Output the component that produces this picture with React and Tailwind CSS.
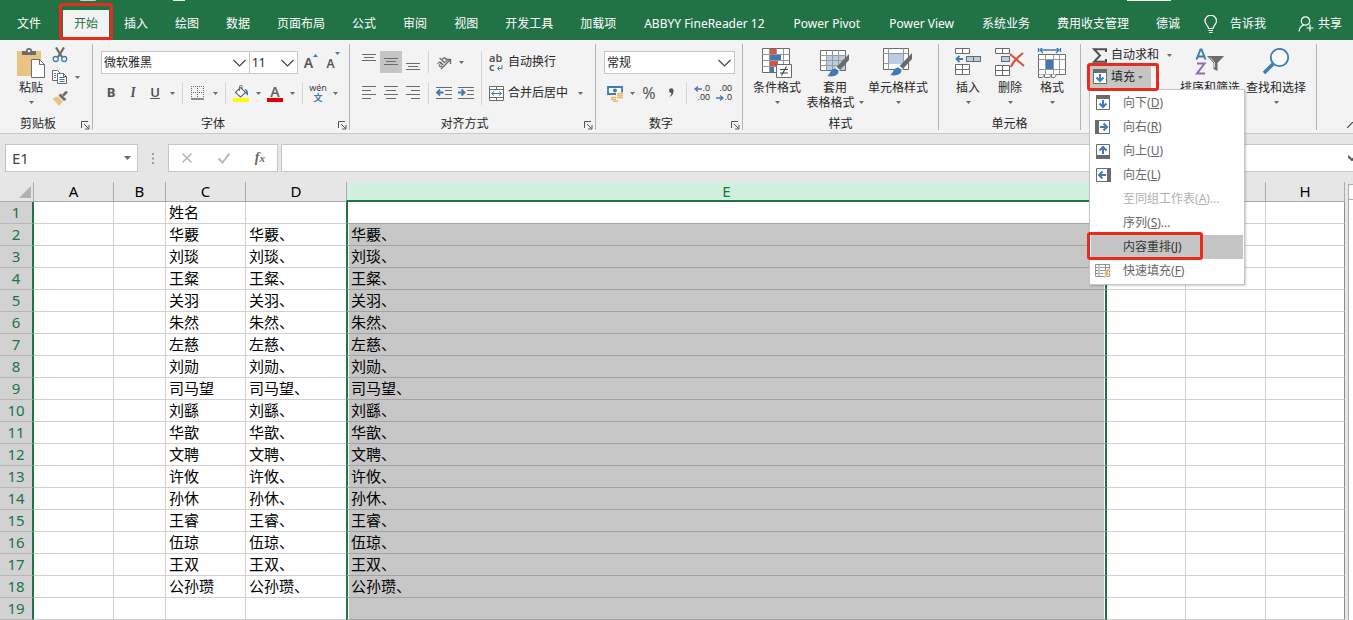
import React from 'react';

const tabs = ['插入', '绘图', '数据', '页面布局', '公式', '审阅', '视图', '开发工具', '加载项'];
const addinTabs = ['ABBYY FineReader 12', 'Power Pivot', 'Power View'];
const customTabs = ['系统业务', '费用收支管理', '德诚'];

const names = [
  '华覈', '刘琰', '王粲', '关羽', '朱然', '左慈', '刘勋', '司马望', '刘繇',
  '华歆', '文聘', '许攸', '孙休', '王睿', '伍琼', '王双', '公孙瓒',
];

const rows = Array.from({ length: 19 }, (_, i) => {
  const name = names[i - 1];
  return {
    n: i + 1,
    c: i === 0 ? '姓名' : name || '',
    d: name ? `${name}、` : '',
    e: name ? `${name}、` : '',
  };
});

const fillMenu = [
  { label: '向下', letter: 'D', icon: 'down' },
  { label: '向右', letter: 'R', icon: 'right' },
  { label: '向上', letter: 'U', icon: 'up' },
  { label: '向左', letter: 'L', icon: 'left' },
  { label: '至同组工作表', letter: 'A', more: true, disabled: true },
  { label: '序列', letter: 'S', more: true },
  { label: '内容重排', letter: 'J', active: true },
  { label: '快速填充', letter: 'F', icon: 'flash' },
];

const GRAY = '#6b6b6b';
const BLUE = '#3f7ab5';

/* ---------- small shared parts ---------- */

const Svg = ({ w = 16, h = 16, children }) => (
  <svg width={w} height={h} viewBox={`0 0 ${w} ${h}`} fill="none" className="shrink-0" aria-hidden="true">
    {children}
  </svg>
);

const Triangle = () => (
  <Svg w={5} h={3}><path d="M0 0h5L2.5 3z" fill={GRAY} /></Svg>
);

const CaretButton = ({ label }) => (
  <button type="button" aria-label={label} className="flex h-[22px] w-3 items-center justify-center">
    <Triangle />
  </button>
);

const IconButton = ({ label, active, children }) => (
  <button
    type="button"
    aria-label={label}
    className={`flex h-[22px] w-[22px] items-center justify-center ${active ? 'bg-[#c5c5c5]' : ''}`}
  >
    {children}
  </button>
);

const MiniSep = () => <div className="mx-1 h-[22px] w-px bg-[#d5d5d5]" />;

const GroupSep = () => <div className="h-[86px] w-px shrink-0 bg-[#b4b4b4]" />;

const Launcher = ({ label }) => (
  <button type="button" aria-label={label} className="absolute right-0.5 bottom-0.5">
    <Svg w={9} h={9}>
      <path d="M.5 7V.5H7M3 3l4.500 4.500M8 4v4H4" stroke="#555" />
    </Svg>
  </button>
);

const Group = ({ label, launcher, width, children }) => (
  <section aria-label={label || '编辑'} className={`flex h-[88px] shrink-0 flex-col ${width}`}>
    <div className="flex h-[72px]">{children}</div>
    <footer className={`relative h-4 text-center leading-4 ${launcher ? 'pr-4' : ''}`}>
      {label}
      {launcher && <Launcher label={`${label}设置`} />}
    </footer>
  </section>
);

const Dropdown = ({ label, value, width }) => (
  <div className={`relative h-[23px] ${width}`}>
    <select
      aria-label={label}
      defaultValue={value}
      className="h-full w-full appearance-none border border-[#c6c6c6] bg-white px-[2px] text-xs text-[#262626]"
    >
      <option>{value}</option>
    </select>
    <span className="pointer-events-none absolute inset-y-0 right-1 flex items-center">
      <Svg w={13} h={8}><path d="M.5 1l6 6 6-6" stroke="#444" strokeWidth="1.2" /></Svg>
    </span>
  </div>
);

const BigButton = ({ icon, lines, width }) => (
  <button type="button" className={`flex flex-col items-center pt-1 leading-[15px] ${width}`}>
    <span className="flex h-8 items-start justify-center">{icon}</span>
    <span className="whitespace-nowrap">{lines[0]}</span>
    <span className="flex h-[15px] items-center gap-1 whitespace-nowrap">
      {lines[1] && <span>{lines[1]}</span>}
      <Triangle />
    </span>
  </button>
);

/* ---------- icons ---------- */

const PasteIcon = () => (
  <Svg w={28} h={30}>
    <rect x="0" y="3" width="24" height="25" fill="#eac282" />
    <path d="M5 7V3h4a3 3 0 0 1 6 0h4v4z" fill={GRAY} />
    <circle cx="12" cy="3" r="1.3" fill="#f3f3f3" />
    <path d="M14.500 11.500h8l5 5v13h-13z" fill="#fff" stroke={GRAY} />
    <path d="M22.500 11.500v5h5" stroke={GRAY} />
  </Svg>
);

const CutIcon = () => (
  <Svg>
    <path d="M4 .5l6 9.500M12 .5L6 10" stroke={GRAY} strokeWidth="2.200" />
    <circle cx="3.700" cy="12" r="2.500" stroke={BLUE} strokeWidth="1.300" />
    <circle cx="12.200" cy="12" r="2.500" stroke={BLUE} strokeWidth="1.300" />
  </Svg>
);

const CopyIcon = () => (
  <Svg>
    <path d="M6 11.500H.5v-10h5l3 3" stroke={GRAY} fill="#fff" />
    <path d="M5.500 4.500h6l3 3v7h-9z" fill="#fff" stroke={GRAY} />
    <path d="M11.500 4.500v3h3" stroke={GRAY} />
    <path d="M2 4.500h2M2 6.500h2M2 8.500h2M7.500 8.500h5M7.500 10.500h5M7.500 12.500h5" stroke={BLUE} />
  </Svg>
);

const BrushIcon = () => (
  <Svg>
    <path d="M1 7l5-1.500 5 5L7 15 1 8z" fill="#eac282" />
    <path d="M6.500 4.500l2-2 6 6-2.500 1.500z" fill={GRAY} />
    <path d="M11 4.500l4-4" stroke={GRAY} strokeWidth="2.500" />
  </Svg>
);

const GrowShrink = ({ up }) => (
  <span className="flex items-start text-[#555]">
    <span className={up ? 'pt-0.5 text-sm leading-4 font-semibold' : 'pt-1 text-xs leading-4 font-semibold'}>A</span>
    <Svg w={5} h={4}><path d={up ? 'M0 4h5L2.500 1z' : 'M0 0h5L2.500 3z'} fill={BLUE} /></Svg>
  </span>
);

const BordersIcon = () => (
  <Svg w={14} h={14}>
    <path d="M.5 0v12M6.500 0v12M12.500 0v12M0 .5h13M0 6.500h13" stroke={GRAY} strokeDasharray="1 1" />
    <path d="M0 13h13" stroke={GRAY} strokeWidth="1.500" />
  </Svg>
);

const BucketIcon = () => (
  <Svg w={16} h={17}>
    <path d="M2.500 7.500L7.500 2.500l5 5-5 4.500z" fill="#fff" stroke={GRAY} strokeWidth="1.200" />
    <path d="M6.500 6V1.500a1.200 1.200 0 0 1 2.500 0V4" stroke={GRAY} />
    <path d="M11.500 4c2.500 0 4 2 3.500 6.500-2-.5-2.500-3-2-4z" fill={BLUE} />
    <rect x="0" y="13" width="16" height="4" fill="#ffff00" />
  </Svg>
);

const FontColor = () => (
  <span className="flex flex-col items-center">
    <span className="text-sm leading-[13px] font-semibold text-[#666]">A</span>
    <span className="h-1 w-4 bg-[#e00000]" />
  </span>
);

const Phonetic = () => (
  <span className="flex flex-col items-center text-[9px] leading-[10px]">
    <span className="text-[#444]">wén</span>
    <span className="font-bold text-[#3f7ab5]">文</span>
  </span>
);

const lineSets = {
  left: [[0, 2, 14], [0, 6, 9], [0, 10, 14], [0, 14, 9]],
  center: [[0, 2, 14], [2, 6, 10], [0, 10, 14], [2, 14, 10]],
  right: [[0, 2, 14], [5, 6, 9], [0, 10, 14], [5, 14, 9]],
};

const VAlign = ({ pos }) => {
  const y = { top: 0, middle: 4, bottom: 9 }[pos];
  return (
    <Svg w={14} h={16}>
      <path d={`M0 ${y + 0.5}h14M2 ${y + 3.5}h10M0 ${y + 6.5}h14`} stroke={GRAY} />
    </Svg>
  );
};

const HAlign = ({ kind }) => (
  <Svg w={14} h={16}>
    {lineSets[kind].map(([x, y, len]) => (
      <path key={y} d={`M${x} ${y - 0.5}h${len}`} stroke={GRAY} />
    ))}
  </Svg>
);

const IndentIcon = ({ dir }) => (
  <Svg w={16} h={14}>
    <path d="M0 1.500h16M9 4.500h7M9 8.500h7M0 12.500h16" stroke={GRAY} />
    {dir === 'out'
      ? <path d="M7.500 6.500H1.500M4 3.500l-3 3 3 3" stroke={BLUE} strokeWidth="1.800" />
      : <path d="M0 6.500h6M3.500 3.500l3 3-3 3" stroke={BLUE} strokeWidth="1.800" />}
  </Svg>
);

const OrientIcon = () => (
  <Svg w={20} h={20}>
    <text x="2" y="13" fontSize="10" fontWeight="600" fill={GRAY} transform="rotate(-45 8 10)">ab</text>
    <path d="M7 17l9-9M12 7.500h4.500V12" stroke={GRAY} strokeWidth="1.300" />
  </Svg>
);

const WrapIcon = () => (
  <span className="flex w-4 flex-col items-start text-[11px] leading-[9px] font-semibold text-[#555]">
    <span>ab</span>
    <span className="flex items-end gap-0.5">
      c
      <Svg w={6} h={6}><path d="M5 0v3.500H1M2.500 1.500l-2 2 2 2" stroke={BLUE} /></Svg>
    </span>
  </span>
);

const MergeIcon = () => (
  <Svg w={15} h={15}>
    <path d="M.5.5h14v14H.5zM.5 3.500h14M.5 11.500h14M7.500 .5v3M7.500 11.500v3" stroke={GRAY} fill="#fff" />
    <path d="M3 7.500h9M5 5.500l-2.500 2 2.500 2M10 5.500l2.500 2-2.500 2" stroke={BLUE} />
  </Svg>
);

const MoneyIcon = () => (
  <Svg w={17} h={17}>
    <path d="M1 2h14v7H1z" fill="#fff" stroke={BLUE} strokeWidth="1.800" />
    <circle cx="8" cy="5.500" r="2" fill={BLUE} />
    <path d="M9 7.500h7v7H9z" fill="#f3f3f3" />
    <path d="M10 8.500h6M10 10.500h6M10 12.500h6M4 12.500h5M4 14.500h5M6 16.200h5" stroke="#eab96c" strokeWidth="1.400" />
  </Svg>
);

const DecimalIcon = ({ more }) => (
  <span className="flex w-4 flex-col font-['Liberation_Sans',sans-serif] text-[9px] leading-[9px] text-[#333]">
    <span className="flex items-center justify-end">
      {more && <Svg w={8} h={6}><path d="M8 3H1.500M4 .5L1 3l3 2.500" stroke={BLUE} strokeWidth="1.300" /></Svg>}
      {more ? '.0' : '.00'}
    </span>
    <span className="flex items-center justify-end">
      {!more && <Svg w={8} h={6}><path d="M0 3h6.500M4 .5L7 3 4 5.500" stroke={BLUE} strokeWidth="1.300" /></Svg>}
      {more ? '.00' : '.0'}
    </span>
  </span>
);

const CondFormatIcon = () => (
  <Svg w={31} h={30}>
    <path d="M.5.500h27v24H.5z" fill="#fff" stroke={GRAY} />
    <path d="M.5 6.500h27M.5 12.500h27M.5 18.500h27M7.500 .5v24M14.500 .5v24M21.500 .5v24" stroke="#9a9a9a" />
    <rect x="8" y="1" width="6" height="5" fill="#d2573d" />
    <rect x="8" y="7" width="11" height="5" fill={BLUE} />
    <rect x="8" y="13" width="8" height="5" fill="#d2573d" />
    <rect x="8" y="19" width="4" height="5" fill={BLUE} />
    <path d="M14.500 16.500h15v13h-15z" fill="#fff" stroke={GRAY} />
    <path d="M18 21.500h8M18 25h8M24.500 18.500l-5 9" stroke="#444" strokeWidth="1.200" />
  </Svg>
);

const PaintBrush = () => (
  <>
    <path d="M29 6v6l-9 10-3.500-3z" fill={GRAY} />
    <path d="M16 19.500l3.500 3" stroke="#fff" strokeWidth="1.500" />
    <path d="M7 28c3-1 3-6 7-7.500 3 0 5.500 2.500 4 5C16 28.500 11 29 7 28z" fill={BLUE} />
  </>
);

const TableFormatIcon = () => (
  <Svg w={30} h={30}>
    <path d="M.5 2.500h25v20H.5z" fill="#fff" stroke={GRAY} />
    <rect x="7" y="8" width="18" height="14" fill="#b9cde4" />
    <path d="M.5 7.500h25M.5 12.500h25M.5 17.500h25M6.500 2.500v20M12.500 2.500v20M18.500 2.500v20" stroke="#9a9a9a" />
    <PaintBrush />
  </Svg>
);

const CellStyleIcon = () => (
  <Svg w={30} h={30}>
    <path d="M.5.5h25v21H.5z" fill="#fff" stroke={GRAY} />
    <path d="M.5 5.500h25M.5 15.500h25M5.500 .5v21M20.500 .5v21" stroke="#9a9a9a" />
    <rect x="6" y="6" width="14" height="10" fill="#b9cde4" />
    <g transform="translate(0 -1)"><PaintBrush /></g>
  </Svg>
);

const InsertCellsIcon = () => (
  <Svg w={27} h={30}>
    <path d="M.5.5h14v5H.5zM7.500 .5v5M.5 16.500h14v10H.5zM.5 21.500h14M7.500 16.500v10" stroke={GRAY} fill="#fff" />
    <rect x="11.500" y="8.500" width="14" height="5" fill="#b9cde4" stroke={GRAY} />
    <path d="M18.500 8.500v5" stroke={GRAY} />
    <path d="M8 11H2M4.500 8L1.500 11l3 3" stroke={BLUE} strokeWidth="1.800" />
  </Svg>
);

const DeleteCellsIcon = () => (
  <Svg w={30} h={30}>
    <path d="M.5.5h14v5H.5zM7.500 .5v5M.5 17.500h14v10H.5zM.5 22.500h14M7.500 17.500v10" stroke={GRAY} fill="#fff" />
    <rect x="6.500" y="8.500" width="8" height="5" fill="#b9cde4" stroke={GRAY} />
    <path d="M15 6l14 12M28 5C23 9 18 13 16 19" stroke="#d2573d" strokeWidth="2.200" />
  </Svg>
);

const FormatCellsIcon = () => (
  <Svg w={30} h={31}>
    <path d="M1.500 -1v5M23.500 -1v5M3 2h19M6 -1L3 2l3 3M19 -1l3 3-3 3" stroke={BLUE} strokeWidth="1.300" />
    <path d="M1.500 6.500h27v20h-27z" fill="#fff" stroke={GRAY} />
    <path d="M1.500 11.500h27M1.500 21.500h27M8.500 6.500v20M16.500 6.500v20M22.500 6.500v20" stroke="#9a9a9a" />
    <rect x="9" y="12" width="7" height="9" fill={BLUE} />
    <path d="M1.500 26.500v3h4l2-3v3h5l2-3v3h3l2-3" stroke={GRAY} fill="#fff" />
  </Svg>
);

const SortFilterIcon = () => (
  <Svg w={30} h={30}>
    <path d="M1.500 11.500L5.500 1.500h1l4 10M3 8.500h6" stroke={BLUE} strokeWidth="2" />
    <path d="M2 15.500h7.500L2 25.500h8" stroke="#9068b8" strokeWidth="2" />
    <path d="M12 8h17l-6.500 7v8l-4-2v-6z" fill={GRAY} />
    <path d="M15 9.500l4.500 5v5" stroke="#d8d8d8" />
  </Svg>
);

const FindIcon = () => (
  <Svg w={28} h={28}>
    <circle cx="17.500" cy="9.500" r="8.700" stroke={BLUE} strokeWidth="1.800" fill="#fafafa" />
    <path d="M11 16L2 25" stroke={BLUE} strokeWidth="3.500" />
  </Svg>
);

const SigmaIcon = () => (
  <Svg w={16} h={15}>
    <path d="M14 4V1.200H2l6 6.300-6 6.300h12V11" stroke="#505050" strokeWidth="2" />
  </Svg>
);

// Arrow box with a solid band on the side the fill starts from
const fillRotation = { down: 0, left: 90, up: 180, right: 270 };

const FillIcon = ({ dir }) => (
  <Svg>
    <g transform={`rotate(${fillRotation[dir]} 8 8)`}>
      <path d="M1.500 1.500h13v13h-13z" fill="#fff" stroke={GRAY} />
      <rect x="1" y="0" width="14" height="4" fill={GRAY} />
      <path d="M8 5v7M4.500 8.500L8 12l3.500-3.500" stroke={BLUE} strokeWidth="2" />
    </g>
  </Svg>
);

const FlashFillIcon = () => (
  <Svg>
    <path d="M.5 1.500h14v12H.5zM.5 4.500h3M5 4.500h5M.5 7.500h3M5 7.500h5M.5 10.500h3M5 10.500h5M4 1.500v12M10.500 1.500v12M11 4.500h4" stroke="#8a9a90" fill="#fff" />
    <path d="M12 6L8.500 11H11l-2 5 6-6h-2.500L15.500 6z" fill="#eab05c" stroke="#fff" strokeWidth=".5" />
  </Svg>
);

/* ---------- page sections ---------- */

const Callout = ({ className }) => (
  <span className={`pointer-events-none absolute z-20 rounded-[3px] border-3 border-[#ea2a1d] ${className}`} />
);

const TitleTabs = () => (
  <header className="relative flex h-10 items-end bg-[#217346] pb-[3px] text-white">
    <span className="absolute top-0 left-20 h-px w-4 rounded-b bg-white/70" />
    <span className="absolute top-0 left-[173px] h-px w-3 bg-white/90" />
    <span className="absolute top-0 right-[182px] h-px w-11 bg-white" />
    <nav className="flex h-[27px] items-center pl-[17px] whitespace-nowrap">
      <button type="button" className="mr-[22px]">文件</button>
      <button type="button" className="relative mr-[15px] h-[27px] bg-[#f3f3f3] px-[11px] text-[#217346]">
        开始
        <Callout className="-inset-x-1 -top-[7px] -bottom-[3px]" />
      </button>
      <div className="flex gap-[27px]">
        {tabs.map((t) => <button type="button" key={t}>{t}</button>)}
        {addinTabs.map((t) => <button type="button" key={t} className="px-px">{t}</button>)}
        {customTabs.map((t) => <button type="button" key={t}>{t}</button>)}
      </div>
    </nav>
    <button type="button" className="ml-6 flex h-[27px] items-center gap-3 whitespace-nowrap">
      <Svg w={14} h={18}>
        <path d="M4.500 13.500c0-2.500-3.500-4-3.500-7.500a5.500 5.500 0 0 1 11.500 0c0 3.500-3.500 5-3.500 7.500zM4.500 15.500H9M5 17.500h3.500" stroke="#fff" strokeWidth="1.200" />
      </Svg>
      告诉我
    </button>
    <button type="button" className="mr-[11px] ml-auto flex h-[27px] items-center gap-1 whitespace-nowrap">
      <Svg w={16} h={16}>
        <circle cx="7.500" cy="5" r="4.200" stroke="#fff" strokeWidth="1.200" />
        <path d="M1 15.500c.5-4 2.500-6 5-6.500M12 8.500v7M8.500 12h7" stroke="#fff" strokeWidth="1.200" />
      </Svg>
      共享
    </button>
  </header>
);

const FillMenu = () => (
  <ul role="menu" className="absolute top-[23px] left-0 z-10 w-39 border border-[#c6c6c6] bg-white py-px shadow-[1px_1px_2px_rgba(0,0,0,0.2)]">
    {fillMenu.map((m) => (
      <li key={m.letter} role="none" className="relative px-px">
        <button
          type="button"
          role="menuitem"
          disabled={m.disabled}
          className={`flex h-6 w-full items-center pl-1 whitespace-nowrap ${m.active ? 'bg-[#c5c5c5] text-[#333]' : m.disabled ? 'text-[#b0b0b0]' : 'text-[#666]'}`}
        >
          <span className="mr-3 w-4">
            {m.icon === 'flash' ? <FlashFillIcon /> : m.icon && <FillIcon dir={m.icon} />}
          </span>
          {m.label}(<u>{m.letter}</u>){m.more && '...'}
        </button>
        {m.active && <Callout className="-top-[3px] -bottom-px -left-[3px] w-29" />}
      </li>
    ))}
  </ul>
);

const Ribbon = () => (
  <div className="flex items-start border-b border-[#c9c9c9] bg-[#f3f3f3] pt-1 pb-px">
    <Group label="剪贴板" launcher width="w-[92px]">
      <div className="flex pl-[13px]">
        <BigButton icon={<PasteIcon />} lines={['粘贴']} width="w-9" />
        <div className="flex flex-col">
          <IconButton label="剪切"><CutIcon /></IconButton>
          <div className="flex">
            <IconButton label="复制"><CopyIcon /></IconButton>
            <CaretButton label="复制选项" />
          </div>
          <IconButton label="格式刷"><BrushIcon /></IconButton>
        </div>
      </div>
    </Group>
    <GroupSep />

    <Group label="字体" launcher width="w-[256px]">
      <div className="flex flex-col gap-2 pt-[7px] pl-2">
        <div className="flex">
          <Dropdown label="字体" value="微软雅黑" width="w-[149px]" />
          <Dropdown label="字号" value="11" width="-ml-px w-[49px]" />
          <div className="ml-0.5 flex">
            <IconButton label="增大字号"><GrowShrink up /></IconButton>
            <IconButton label="减小字号"><GrowShrink /></IconButton>
          </div>
        </div>
        <div className="-ml-px flex text-[13px] text-[#555]">
          <IconButton label="加粗"><b>B</b></IconButton>
          <IconButton label="倾斜"><i className="font-serif font-bold">I</i></IconButton>
          <IconButton label="下划线"><u className="font-semibold">U</u></IconButton>
          <CaretButton label="下划线选项" />
          <MiniSep />
          <IconButton label="边框"><BordersIcon /></IconButton>
          <CaretButton label="边框选项" />
          <MiniSep />
          <IconButton label="填充颜色"><BucketIcon /></IconButton>
          <CaretButton label="填充颜色选项" />
          <IconButton label="字体颜色"><FontColor /></IconButton>
          <CaretButton label="字体颜色选项" />
          <MiniSep />
          <IconButton label="拼音"><Phonetic /></IconButton>
          <CaretButton label="拼音选项" />
        </div>
      </div>
    </Group>
    <GroupSep />

    <Group label="对齐方式" launcher width="w-[245px]">
      <div className="flex pt-[7px] pl-2">
        <div className="flex flex-col gap-[9px]">
          <div className="flex">
            <IconButton label="顶端对齐"><VAlign pos="top" /></IconButton>
            <IconButton label="垂直居中" active><VAlign pos="middle" /></IconButton>
            <IconButton label="底端对齐"><VAlign pos="bottom" /></IconButton>
            <MiniSep />
            <IconButton label="方向"><OrientIcon /></IconButton>
            <CaretButton label="方向选项" />
          </div>
          <div className="flex">
            <IconButton label="左对齐"><HAlign kind="left" /></IconButton>
            <IconButton label="居中"><HAlign kind="center" /></IconButton>
            <IconButton label="右对齐"><HAlign kind="right" /></IconButton>
            <MiniSep />
            <IconButton label="减少缩进量"><IndentIcon dir="out" /></IconButton>
            <IconButton label="增加缩进量"><IndentIcon dir="in" /></IconButton>
          </div>
        </div>
        <div className="mx-1 h-[54px] w-px bg-[#d5d5d5]" />
        <div className="flex flex-col gap-[9px] pl-[3px] whitespace-nowrap">
          <button type="button" className="flex h-[22px] items-center gap-[3px]"><WrapIcon />自动换行</button>
          <div className="flex gap-1.5">
            <button type="button" className="flex h-[22px] items-center gap-1"><MergeIcon />合并后居中</button>
            <CaretButton label="合并选项" />
          </div>
        </div>
      </div>
    </Group>
    <GroupSep />

    <Group label="数字" launcher width="w-[146px]">
      <div className="flex flex-col gap-2 pt-[7px] pl-2">
        <Dropdown label="数字格式" value="常规" width="w-[131px]" />
        <div className="flex">
          <IconButton label="会计数字格式"><MoneyIcon /></IconButton>
          <CaretButton label="会计数字格式选项" />
          <IconButton label="百分比样式"><span className="text-base text-[#555]">%</span></IconButton>
          <IconButton label="千位分隔样式">
            <Svg w={7} h={10}><path d="M1 2.500a2.300 2.300 0 1 1 4.600 0C5.600 6 4 8 1.500 9 3 7 3.500 6 3.200 4.800 2 4.800 1 4 1 2.500z" fill="#555" /></Svg>
          </IconButton>
          <MiniSep />
          <IconButton label="增加小数位数"><DecimalIcon more /></IconButton>
          <IconButton label="减少小数位数"><DecimalIcon /></IconButton>
        </div>
      </div>
    </Group>
    <GroupSep />

    <Group label="样式" width="w-[195px]">
      <div className="flex pl-1.5">
        <BigButton icon={<CondFormatIcon />} lines={['条件格式']} width="w-14" />
        <BigButton icon={<TableFormatIcon />} lines={['套用', '表格格式']} width="w-15" />
        <BigButton icon={<CellStyleIcon />} lines={['单元格样式']} width="w-[66px]" />
      </div>
    </Group>
    <GroupSep />

    <Group label="单元格" width="w-[141px]">
      <div className="flex pl-2">
        <BigButton icon={<InsertCellsIcon />} lines={['插入']} width="w-[42px]" />
        <BigButton icon={<DeleteCellsIcon />} lines={['删除']} width="w-[42px]" />
        <BigButton icon={<FormatCellsIcon />} lines={['格式']} width="w-[42px]" />
      </div>
    </Group>
    <GroupSep />

    <Group label="" width="w-[235px]">
      <div className="flex pl-2 whitespace-nowrap">
        <div className="w-22">
          <div className="flex gap-1">
            <button type="button" className="flex h-[22px] items-center gap-[3px] pl-[3px]"><SigmaIcon />自动求和</button>
            <CaretButton label="自动求和选项" />
          </div>
          <div className="relative">
            <button type="button" aria-haspopup="menu" aria-expanded="true" className="flex h-[22px] w-[62px] items-center gap-[3px] bg-[#c5c5c5] pl-[3px]">
              <FillIcon dir="down" />
              填充
              <Triangle />
            </button>
            <Callout className="-top-[3px] -left-0.5 h-7 w-18" />
            <FillMenu />
          </div>
        </div>
        <BigButton icon={<SortFilterIcon />} lines={['排序和筛选']} width="w-[66px]" />
        <BigButton icon={<FindIcon />} lines={['查找和选择']} width="w-[66px]" />
      </div>
    </Group>
    <GroupSep />
    <button type="button" aria-label="折叠功能区" className="ml-auto self-end overflow-hidden pb-1">
      <Svg w={6} h={6}><path d="M0 6l6-6" stroke="#444" strokeWidth="1.200" /></Svg>
    </button>
  </div>
);

const FormulaBar = () => (
  <div className="flex bg-[#e6e6e6] py-[10px] pl-[5px]">
    <div className="relative h-7 w-[133px] border border-[#c6c6c6] bg-white">
      <input aria-label="名称框" defaultValue="E1" className="h-full w-full px-1.5 text-[15px] text-[#444] outline-none" />
      <span className="absolute inset-y-0 right-1.5 flex items-center">
        <Svg w={7} h={4}><path d="M0 0h7L3.500 4z" fill={GRAY} /></Svg>
      </span>
    </div>
    <div className="flex w-[30px] items-center justify-center">
      <Svg w={2} h={11}><path d="M1 0v2M1 4.500v2M1 9v2" stroke="#9a9a9a" strokeWidth="2" /></Svg>
    </div>
    <div className="flex h-7 w-[110px] items-center justify-around border border-[#c6c6c6] bg-white">
      <button type="button" aria-label="取消">
        <Svg w={12} h={12}><path d="M1.500 1.500l9 9M10.500 1.500l-9 9" stroke="#b8b8b8" strokeWidth="1.600" /></Svg>
      </button>
      <button type="button" aria-label="输入">
        <Svg w={14} h={12}><path d="M1.500 6.500l4 4 7-9" stroke="#b8b8b8" strokeWidth="2" /></Svg>
      </button>
      <button type="button" aria-label="插入函数" className="font-['Liberation_Serif',serif] text-sm leading-4 font-bold text-[#666] italic">
        f<span className="text-[11px]">x</span>
      </button>
    </div>
    <div className="relative ml-[3px] h-7 flex-1 overflow-hidden border border-r-0 border-[#c6c6c6] bg-white">
      <input aria-label="编辑栏" className="h-full w-full px-1 text-sm outline-none" />
      <span className="absolute inset-y-0 right-0 flex items-center">
        <Svg w={5} h={6}><path d="M0 1l4 4 4-4" stroke="#555" strokeWidth="2" /></Svg>
      </span>
    </div>
  </div>
);

const headCell = 'h-5 border-r border-b border-[#ababab] bg-[#e6e6e6] p-0 font-normal';
const bodyCell = 'border-r border-b border-[#d0d0d0] bg-white p-0 pl-[3px]';

const Sheet = () => (
  <div className="flex bg-[#e6e6e6]">
    <table className="flex-1 table-fixed border-separate border-spacing-0 text-[15px] leading-[21px] whitespace-nowrap text-black">
      <colgroup>
        <col className="w-[34px]" />
        <col className="w-20" />
        <col className="w-13" />
        <col className="w-20" />
        <col className="w-25" />
        <col />
        <col className="w-[79px]" />
        <col className="w-20" />
        <col className="w-[79px]" />
      </colgroup>
      <thead>
        <tr className="leading-[19px]">
          <th className={headCell} aria-label="全选">
            <span className="flex justify-end pr-0.5">
              <Svg w={12} h={12}><path d="M12 0v12H0z" fill="#b2b2b2" /></Svg>
            </span>
          </th>
          {['A', 'B', 'C'].map((c) => <th key={c} className={headCell}>{c}</th>)}
          <th className="border-b border-[#ababab] bg-[#e6e6e6] p-0 font-normal">D</th>
          <th className="border-x border-b-2 border-x-[#ababab] border-b-[#217346] bg-[#d2f0e0] p-0 leading-[18px] font-normal text-[#217346]">E</th>
          {['F', 'G', 'H'].map((c) => <th key={c} className={headCell}>{c}</th>)}
        </tr>
      </thead>
      <tbody>
        {rows.map((r) => (
          <tr key={r.n}>
            <th className="h-[22px] border-r-2 border-b border-r-[#217346] border-b-[#b5b5b5] bg-[#d2d2d2] p-0 font-normal text-[#217346]">{r.n}</th>
            <td className={bodyCell} />
            <td className={bodyCell} />
            <td className={bodyCell}>{r.c}</td>
            <td className="border-b border-[#d0d0d0] bg-white p-0 pl-[3px]">{r.d}</td>
            <td className={`border-x-2 border-b border-x-[#217346] border-b-[#a3a3a3] p-0 pl-[3px] shadow-[inset_1px_0_0_#fff,inset_-1px_0_0_#fff] ${r.n === 1 ? 'bg-white' : 'bg-[#c6c6c6]'}`}>{r.e}</td>
            <td className={bodyCell} />
            <td className={bodyCell} />
            <td className="border-r border-b border-r-[#8f8f8f] border-b-[#d0d0d0] bg-white p-0" />
          </tr>
        ))}
      </tbody>
    </table>
    <div className="flex w-2 flex-col pt-0.5 pl-[3px]">
      <button type="button" aria-label="向上滚动" className="h-4 border border-r-0 border-[#ababab] bg-white" />
      <div className="flex-1 border-l border-[#ababab] bg-white" />
    </div>
  </div>
);

export default function App() {
  return (
    <div className="min-h-screen overflow-hidden bg-[#e6e6e6] font-['Noto_Sans','Noto_Sans_CJK_SC',sans-serif] text-xs text-[#262626]">
      <TitleTabs />
      <Ribbon />
      <FormulaBar />
      <Sheet />
    </div>
  );
}
